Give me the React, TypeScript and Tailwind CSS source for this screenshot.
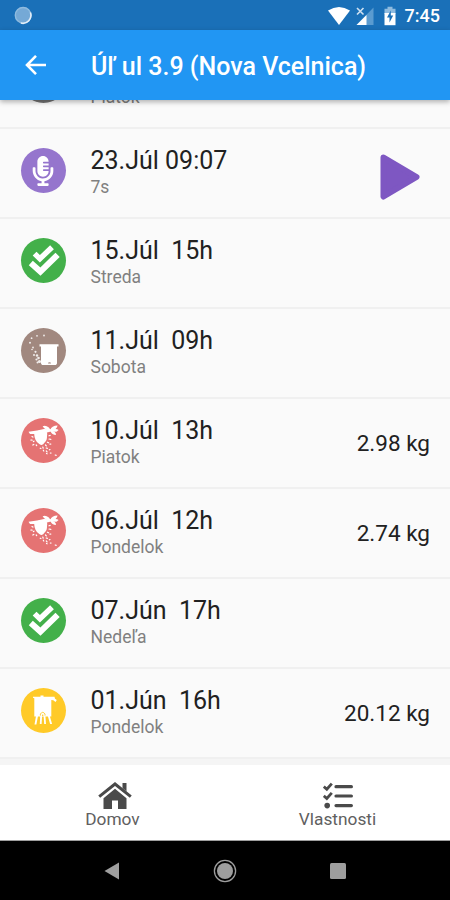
import React from "react";
import { FaMicrophoneAlt } from "react-icons/fa";

type Kind = "hidden" | "voice" | "check" | "feeder" | "harvest" | "extract";

interface Entry {
  kind: Kind;
  title: string;
  subtitle: string;
  weight?: string;
}

const ENTRIES: Entry[] = [
  { kind: "hidden", title: "", subtitle: "Piatok" },
  { kind: "voice", title: "23.Júl 09:07", subtitle: "7s" },
  { kind: "check", title: "15.Júl  15h", subtitle: "Streda" },
  { kind: "feeder", title: "11.Júl  09h", subtitle: "Sobota" },
  { kind: "harvest", title: "10.Júl  13h", subtitle: "Piatok", weight: "2.98 kg" },
  { kind: "harvest", title: "06.Júl  12h", subtitle: "Pondelok", weight: "2.74 kg" },
  { kind: "check", title: "07.Jún  17h", subtitle: "Nedeľa" },
  { kind: "extract", title: "01.Jún  16h", subtitle: "Pondelok", weight: "20.12 kg" },
];

const KIND_COLORS: Record<Kind, string> = {
  hidden: "bg-[#757575]",
  voice: "bg-[#9575cd]",
  check: "bg-[#43b04a]",
  feeder: "bg-[#a1887f]",
  harvest: "bg-[#e57373]",
  extract: "bg-[#ffca28]",
};

function CheckGlyph() {
  return (
    <svg className="size-full" viewBox="0 0 45 45" fill="none" stroke="#fff" strokeWidth="5.4">
      <path d="M13.6 15.6 L18.9 20.8 L31 9.2" />
      <path d="M9.8 25 L19.4 33.6 L36.6 16.8" strokeWidth="6" />
    </svg>
  );
}

// Hive body with a trail of bees curling around it
function FeederGlyph() {
  return (
    <svg className="size-full" viewBox="0 0 45 45" fill="#fff">
      <path d="M18.5 16.3 H37.5 V18.6 H36 V35.5 L35 37 H21 L20 35.5 V18.6 H18.5 Z" />
      <path d="M27 35.5 a1.5 1.2 0 0 1 3 0 Z" fill="#a1887f" />
      <g opacity="0.85">
        <circle cx="23" cy="7.5" r="0.9" />
        <circle cx="16" cy="7.8" r="0.9" />
        <circle cx="10.6" cy="10.2" r="0.9" />
        <circle cx="9" cy="14.8" r="1" />
        <circle cx="12" cy="19.5" r="0.9" />
        <circle cx="11" cy="21.5" r="0.8" />
        <circle cx="14.5" cy="23.8" r="1.1" />
        <circle cx="13" cy="27" r="1" />
        <circle cx="16" cy="27.5" r="1.2" />
        <circle cx="17.5" cy="30" r="1.3" />
        <circle cx="15.5" cy="31.5" r="1.1" />
        <circle cx="18.5" cy="33.5" r="1.6" />
        <circle cx="16.5" cy="34.5" r="1" />
      </g>
    </svg>
  );
}

// Swarm hanging from a branch
function HarvestGlyph() {
  return (
    <svg className="size-full" viewBox="0 0 45 45" fill="#fff">
      <path d="M7.5 13.8 L16 12.6 L23 11 L31 11.2 L36.5 12.2 L36 13.4 L30 13.5 L26 14.6 L17 16 L9 16 Z" />
      <path d="M13 14.5 Q18 11.5 24 12 Q27 14 26 18 Q26.2 22.5 23.6 24.5 Q21.5 28.5 18.3 26 Q13.5 23.5 13 14.5 Z" />
      <path d="M21.6 8.2 Q24.8 6.8 27.8 9.6 L29.8 12.2 Q24.5 13 21.6 8.2 Z" />
      <path d="M29.3 12 Q30.5 7.8 36.6 7.6 Q35.5 12 30.6 13 Z" />
      <path d="M30 12.4 Q34.8 10 37.6 12 Q35 15 30 12.4 Z" />
      <path d="M29 12.4 Q35.2 13 35 17 Q31 17 29 12.4 Z" />
      <g stroke="#fff" strokeWidth="1.2" strokeLinecap="round">
        <path d="M11 18.5 l0.9 0.6 M9.8 22 l1.3 0.1 M12.4 23.6 l0.6 -0.4 M11.8 27 l1 -0.6 M15.2 27 l0.5 0.6 M28 17.8 l1.2 -0.4 M28 21 l1.8 0.3 M26.4 24.2 l1.2 0.6 M24.5 27 l0.8 0.9 M21.8 29 l0.4 1.2 M28.8 26 l1 0.2 M19.2 30.2 l0.7 0.3 M25.2 30 l1.2 0.4 M22.3 32.2 l0.5 0.8 M25.3 33 l0.8 0.8 M28.3 31.8 l0.7 -0.3 M29.3 35 l0.7 0.2 M34.2 37 l1 0.4 M25.5 35.5 l0.6 0.3" />
      </g>
    </svg>
  );
}

// Honey extractor standing on its legs
function ExtractGlyph() {
  return (
    <svg className="size-full" viewBox="0 0 45 45" fill="#fff">
      <path d="M12 8.8 H19.5 V7.4 H22.5 V8.8 H33.5 L34 10.8 L35.8 12 L34.5 14 L32.3 12.3 L30.3 12 V28.5 H13.3 V10.2 L12 9.8 Z" />
      <path d="M15 28 h2 l-1.6 8.6 h-1.9 Z M26.8 28 h2 l2.3 8 h-2 Z" />
      <path d="M19.2 28 h1.9 l-0.5 8 h-1.8 Z M22.6 28 h1.8 l0.6 8 h-1.8 Z" />
      <path d="M19.4 27.6 V26 Q21.7 22.6 24 26 V27.6" fill="none" stroke="#ffca28" strokeWidth="0.9" />
      <circle cx="21.7" cy="27.3" r="0.8" fill="#ffca28" />
    </svg>
  );
}

function EntryIcon({ kind }: { kind: Kind }) {
  return (
    <div
      className={`flex size-[45px] shrink-0 items-center justify-center rounded-full text-white ${KIND_COLORS[kind]}`}
    >
      {kind === "voice" && <FaMicrophoneAlt size={30} />}
      {kind === "check" && <CheckGlyph />}
      {kind === "feeder" && <FeederGlyph />}
      {kind === "harvest" && <HarvestGlyph />}
      {kind === "extract" && <ExtractGlyph />}
    </div>
  );
}

function EntryRow({ entry }: { entry: Entry }) {
  return (
    <li className="flex h-[90px] shrink-0 items-center border-b-2 border-[#f0f0f0] pr-5 pl-[20.5px]">
      <div className="pb-[5px]">
        <EntryIcon kind={entry.kind} />
      </div>
      <div className="ml-[25px] flex-1 pb-px">
        <div className="h-[30px] text-[25px] leading-[30px] whitespace-pre text-[#212121]">{entry.title}</div>
        <div className="text-[17.5px] leading-[23px] text-[#808080]">{entry.subtitle}</div>
      </div>
      {entry.weight && <span className="pt-0.5 text-[22.5px] text-[#212121]">{entry.weight}</span>}
      {entry.kind === "voice" && (
        <button className="mr-[10px] pt-2" aria-label="Play">
          <svg width="40" height="46" viewBox="0 0 40 46">
            <path
              d="M3.5 3.5 L36.5 23 L3.5 42.5 Z"
              fill="#7e57c2"
              stroke="#7e57c2"
              strokeWidth="6"
              strokeLinejoin="round"
            />
          </svg>
        </button>
      )}
    </li>
  );
}

function StatusBar() {
  return (
    <div className="flex h-[30px] shrink-0 items-center justify-between bg-[#1a70b8] pr-[10px] pl-3.5 pt-px text-white">
      <svg width="19" height="19" viewBox="0 0 19 19">
        <circle cx="9.1" cy="9.3" r="7.8" fill="#75a9d6" stroke="#8fbbdf" strokeWidth="1.4" />
        <path d="M16.4 6.5 A8 8 0 0 1 6.8 17" fill="none" stroke="#e3eef8" strokeWidth="1.6" />
      </svg>
      <div className="flex items-center">
        <svg width="24" height="20" viewBox="0 0 24 20" className="mr-[5px]">
          <path d="M1 4.6 Q12 -2.8 23 4.6 L12 19 Z" fill="#fff" />
        </svg>
        <svg width="18" height="20" viewBox="0 0 18 20" className="mr-[10px]">
          <path d="M17.5 1.5 V19 H0.5 Z" fill="#5a9bd0" />
          <path d="M10.5 9 V19 H0.5 Z" fill="#fff" />
          <path d="M0 0 H8.5 V10 H0 Z" fill="#1a70b8" />
          <path d="M1 2 L7.5 8.5 M7.5 2 L1 8.5" stroke="#cfe1f1" strokeWidth="1.6" />
        </svg>
        <svg width="12" height="20" viewBox="0 0 12 20" className="mr-[9px]">
          <path d="M3.5 0.8 H8.5 V2.8 H11.5 V8 H0.5 V2.8 H3.5 Z" fill="#8fbbdf" />
          <path d="M0.5 7 H11.5 V19.2 H0.5 Z" fill="#fff" />
          <path d="M6.8 4.5 L3 11.5 H5.5 V16.5 L9.2 9.5 H6.8 Z" fill="#1a70b8" />
        </svg>
        <span className="pt-px text-[18px] leading-none font-medium">7:45</span>
      </div>
    </div>
  );
}

function AppBar() {
  return (
    <header className="z-10 flex h-[70px] shrink-0 items-center bg-[#2196f3] pl-[25px] text-white shadow-[0_2px_5px_rgba(0,0,0,0.3)]">
      <svg width="22" height="20" viewBox="0 0 22 20" fill="none" stroke="#fff" strokeWidth="2.6">
        <path d="M11 0.9 L2 10 L11 19.1 M2 10 H21" />
      </svg>
      <h1 className="ml-[44px] pt-[3px] text-[25px] font-medium whitespace-nowrap">Úľ ul 3.9 (Nova Vcelnica)</h1>
    </header>
  );
}

function HomeGlyph() {
  return (
    <svg width="34" height="28" viewBox="0 0 34 28" fill="currentColor">
      <path d="M24.5 1 H28.5 V9.5 L24.5 6 Z" />
      <path d="M1.2 14.6 L17 2 L32.8 14.6" fill="none" stroke="currentColor" strokeWidth="3" />
      <path d="M17 6.8 L28.5 16.2 V27 H20 V18.5 H14 V27 H5.5 V16.2 Z" />
    </svg>
  );
}

function ListGlyph() {
  return (
    <svg width="30" height="28" viewBox="0 0 30 28" fill="none" stroke="currentColor" strokeWidth="2.8">
      <path d="M0.8 4.6 L3.8 7.2 L8.8 1.6 M0.8 13.9 L3.8 16.5 L8.8 10.9" />
      <path d="M13 4.7 H28.4 M13 14 H28.4 M13 23.6 H28.4" strokeWidth="3.2" strokeLinecap="round" />
      <circle cx="4.2" cy="23.6" r="2.8" fill="currentColor" stroke="none" />
    </svg>
  );
}

function BottomTabs() {
  return (
    <nav className="flex h-[75px] shrink-0 bg-white text-[#4a4a4a]">
      <button className="flex flex-1 flex-col items-center pt-[17px]">
        <span className="pl-[5px]">
          <HomeGlyph />
        </span>
        <span className="-mt-px text-[17.3px] leading-5 text-[#606060]">Domov</span>
      </button>
      <button className="flex flex-1 flex-col items-center pt-[17px]">
        <ListGlyph />
        <span className="-mt-px text-[17.3px] leading-5 text-[#606060]">Vlastnosti</span>
      </button>
    </nav>
  );
}

function SystemNav() {
  return (
    <div className="flex h-[60px] shrink-0 items-center justify-around border-t border-[#9e9e9e] bg-black px-14">
      <svg width="24" height="24" viewBox="0 0 24 24">
        <path d="M4.5 12 L19 3.5 V20.5 Z" fill="#9e9e9e" />
      </svg>
      <svg width="24" height="24" viewBox="0 0 24 24">
        <circle cx="12" cy="12" r="8" fill="#9e9e9e" />
        <circle cx="12" cy="12" r="10.6" fill="none" stroke="#9e9e9e" strokeWidth="1.3" />
      </svg>
      <svg width="24" height="24" viewBox="0 0 24 24">
        <rect x="4" y="4" width="16" height="16" rx="1.5" fill="#9e9e9e" />
      </svg>
    </div>
  );
}

export default function App() {
  return (
    <div className="flex h-[900px] w-[450px] flex-col overflow-hidden bg-[#f5f5f5] font-[Roboto,sans-serif]">
      <StatusBar />
      <AppBar />
      <ul className="flex h-[659px] shrink-0 flex-col justify-end overflow-hidden bg-[#fafafa]">
        {ENTRIES.map((entry) => (
          <EntryRow key={entry.title} entry={entry} />
        ))}
      </ul>
      <div className="h-1.5 shrink-0" />
      <BottomTabs />
      <SystemNav />
    </div>
  );
}
